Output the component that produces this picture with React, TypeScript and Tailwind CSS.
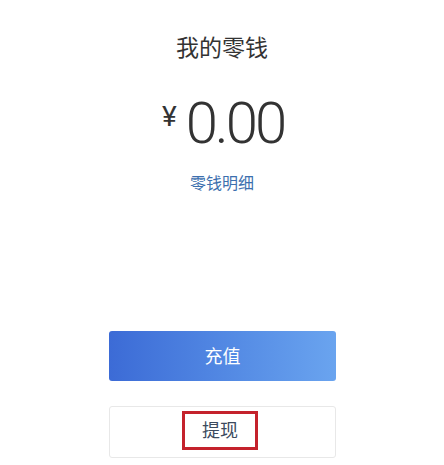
export default function App() {
  return (
    <div className="w-[444px] h-[465px] bg-white flex flex-col items-center font-['Noto_Sans','Noto_Sans_CJK_SC',sans-serif]">
      {/* Title */}
      <h1 className="mt-[31px] text-[23px] leading-[33px] text-[#333333]">我的零钱</h1>

      {/* Balance */}
      <div className="mt-[34px] flex items-start text-[#333333] pl-[2px]">
        <span className="text-[28px] leading-[28px] mt-[5px] mr-[9px] font-['Roboto',sans-serif]">¥</span>
        <span className="text-[58px] leading-[50px] font-['Roboto',sans-serif] font-light tracking-[-3px]">0.00</span>
      </div>

      <a className="mt-[24px] text-[16px] leading-[22px] text-[#3c6fae]">零钱明细</a>

      {/* Actions */}
      <div className="mt-[137px] flex flex-col gap-[25px] w-[227px] ml-[1px]">
        <button className="h-[50px] rounded-[3px] bg-gradient-to-r from-[#3c6bd6] to-[#6aa4ef] text-white text-[18px]">
          充值
        </button>
        <div className="h-[52px] rounded-[3px] border border-[#e8e8e8] bg-white flex items-center justify-center">
          <div className="w-[76px] h-[39px] -mt-[4px] mr-[5px] border-[3px] border-[#c4222c] flex items-center justify-center text-[18px] text-[#3b4a5e]">
            提现
          </div>
        </div>
      </div>
    </div>
  );
}
